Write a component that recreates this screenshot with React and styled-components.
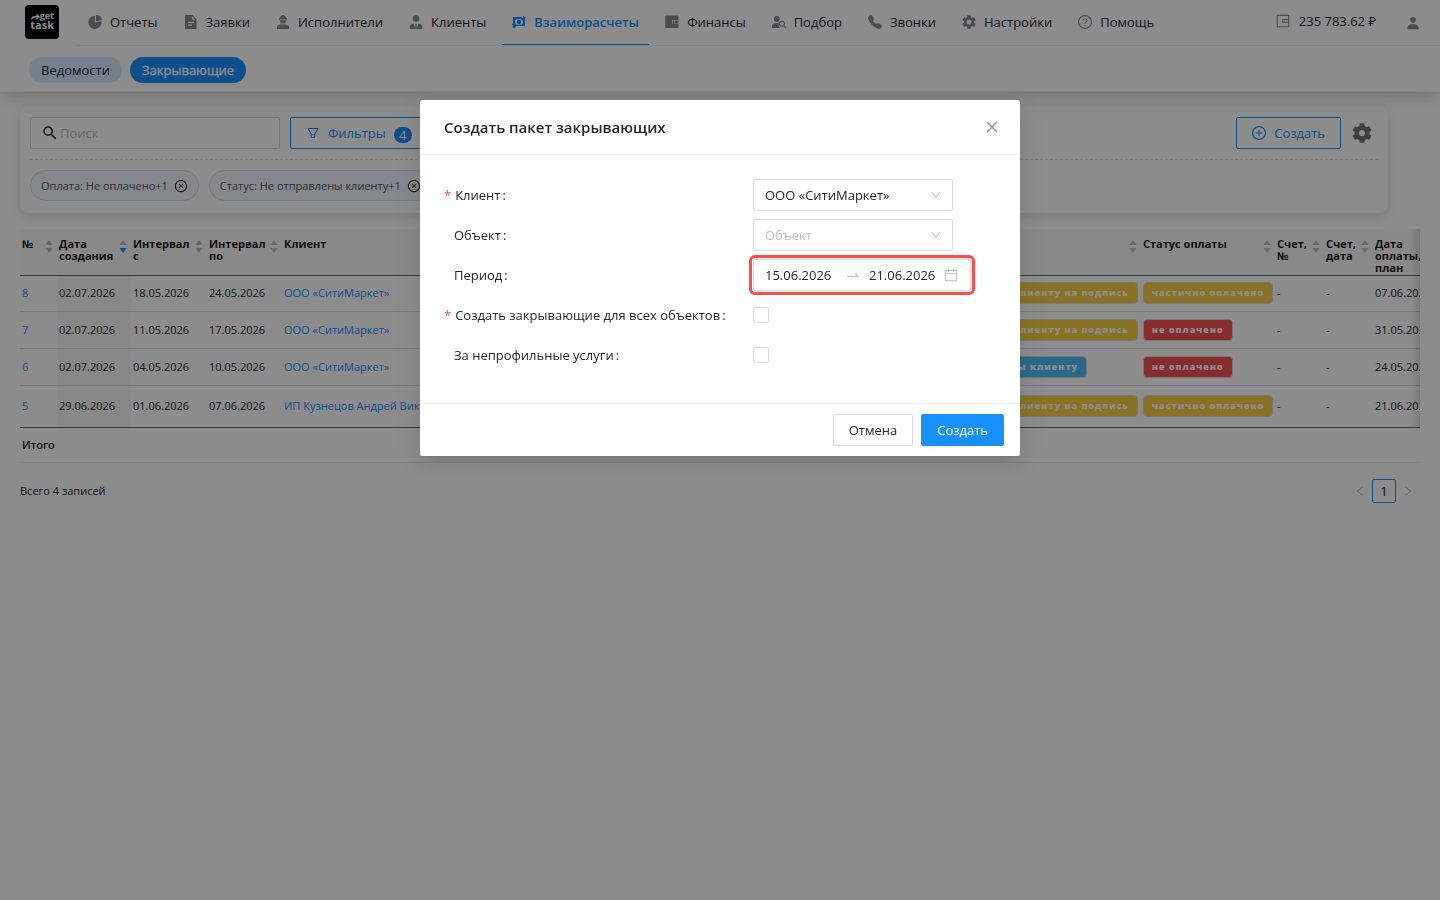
import styled, { createGlobalStyle } from "styled-components";
import {
  AiOutlineCalendar,
  AiOutlineClose,
  AiOutlineCloseCircle,
  AiOutlineDown,
  AiOutlineFilter,
  AiOutlineLeft,
  AiOutlinePlusCircle,
  AiOutlineQuestionCircle,
  AiOutlineRight,
  AiOutlineSwapRight,
  AiOutlineWallet,
} from "react-icons/ai";
import { BsTelephoneFill } from "react-icons/bs";
import { FaCog } from "react-icons/fa";
import { IoPerson } from "react-icons/io5";
import { MdSearch, MdSettings } from "react-icons/md";

const GlobalStyle = createGlobalStyle`
  * {
    box-sizing: border-box;
  }

  body {
    margin: 0;
    background: #fff;
    color: #262626;
    font-family: "Open Sans", "Noto Sans", sans-serif;
    font-size: 13px;
    line-height: 22px;
  }

  button,
  input,
  select {
    font: inherit;
    color: inherit;
  }

  button {
    cursor: pointer;
  }

  a {
    color: #1890ff;
    text-decoration: none;
  }
`;

const Header = styled.header`
  position: relative;
  background: #fff;
  box-shadow: 0 4px 16px rgba(0, 0, 0, 0.18);
`;

const TopBar = styled.div`
  display: flex;
  height: 46px;
  padding-left: 25px;
`;

const Logo = styled.a`
  display: flex;
  flex-direction: column;
  justify-content: center;
  align-items: flex-end;
  width: 34px;
  height: 34px;
  margin: 5px 16px 0 0;
  padding: 0 5px 4px 0;
  border-radius: 4px;
  background: #000;
  color: #fff;
  font-weight: 700;
`;

const LogoTop = styled.span`
  display: flex;
  align-items: center;
  font-size: 9px;
  line-height: 8px;

  svg {
    margin-top: 2px;
  }
`;

const LogoBottom = styled.span`
  font-size: 11px;
  line-height: 9px;
`;

const TopLine = styled.div`
  flex: 1;
  display: flex;
  justify-content: space-between;
  border-bottom: 1px solid #f0f0f0;
`;

const Nav = styled.nav`
  display: flex;
  gap: 6px;
  padding-left: 3px;
`;

const NavLink = styled.a`
  display: flex;
  align-items: center;
  gap: 8px;
  height: 45px;
  padding: 0 10px;
  color: ${({ $active }) => ($active ? "#1890ff" : "#1f2937")};
  font-weight: ${({ $active }) => ($active ? 600 : 400)};
  border-bottom: 1px solid ${({ $active }) => ($active ? "#1890ff" : "transparent")};
  white-space: nowrap;

  svg {
    width: 14px;
    height: 14px;
    color: ${({ $active }) => ($active ? "#1890ff" : "#868d96")};
  }
`;

const Account = styled.div`
  display: flex;
  align-items: center;
  gap: 30px;
  padding-right: 20px;
  color: #1f2937;

  svg {
    color: #868d96;
  }
`;

const Balance = styled.span`
  display: flex;
  align-items: center;
  gap: 8px;
  padding-bottom: 4px;
`;

const IconButton = styled.button`
  display: flex;
  align-items: center;
  justify-content: center;
  padding: 0;
  border: 0;
  background: none;
  color: ${({ $color }) => $color || "#868d96"};
`;

const SubNav = styled.nav`
  display: flex;
  gap: 8px;
  height: 46px;
  margin: 0 25px;
  padding: 11px 4px 0;
  border-bottom: 1px solid #f0f0f0;
`;

const Pill = styled.a`
  height: 26px;
  padding: 0 12px;
  border-radius: 13px;
  line-height: 26px;
  background: ${({ $active }) => ($active ? "#1890ff" : "#d6eaff")};
  color: ${({ $active }) => ($active ? "#fff" : "#1f2937")};
  -webkit-text-stroke: ${({ $active }) => ($active ? "0.3px" : "0")};
`;

const Content = styled.main`
  padding: 15px 20px 0;
`;

const Panel = styled.section`
  height: 106px;
  margin-right: 32px;
  padding: 10px;
  border-radius: 8px;
  background: #fff;
  box-shadow: 0 4px 12px rgba(0, 0, 0, 0.12);
`;

const Toolbar = styled.div`
  display: flex;
  align-items: center;
  gap: 10px;
  padding-bottom: 10px;
  border-bottom: 1px dashed #d9d9d9;
`;

const SearchBox = styled.label`
  display: flex;
  align-items: center;
  gap: 1px;
  width: 250px;
  height: 32px;
  padding: 0 10px;
  border: 1px solid #d9d9d9;
  border-radius: 2px;

  input {
    flex: 1;
    min-width: 0;
    padding: 0;
    border: 0;
    outline: none;
    background: none;
  }

  input::placeholder {
    color: #bfbfbf;
  }
`;

const OutlineButton = styled.button`
  display: flex;
  align-items: center;
  gap: 8px;
  height: 32px;
  margin-left: ${({ $right }) => ($right ? "auto" : "0")};
  padding: 0 15px;
  border: 1px solid #1890ff;
  border-radius: 2px;
  background: #fff;
  color: #1890ff;
`;

const Count = styled.span`
  width: 18px;
  height: 16px;
  margin-top: 4px;
  border-radius: 8px;
  background: #1890ff;
  color: #fff;
  line-height: 16px;
`;

const ToolbarCog = styled(IconButton)`
  width: 22px;
  margin-right: 5px;
`;

const Chips = styled.div`
  display: flex;
  gap: 10px;
  padding-top: 10px;
`;

const Chip = styled.span`
  display: flex;
  align-items: center;
  gap: 6px;
  height: 31px;
  padding: 0 10px;
  border: 1px solid #d3dbee;
  border-radius: 16px;
  background: #f0f8ff;
  color: #555;
  font-size: 11px;
  white-space: nowrap;
`;

const TableScroll = styled.div`
  position: relative;
  margin-top: 16px;
  overflow: hidden;

  &::after {
    content: "";
    position: absolute;
    top: 0;
    right: 0;
    width: 10px;
    height: 198px;
    background: linear-gradient(to left, rgba(0, 0, 0, 0.12), transparent);
  }
`;

const Table = styled.table`
  width: 100%;
  min-width: 1430px;
  table-layout: fixed;
  border-collapse: collapse;
  font-size: 11px;
  line-height: 12px;

  th,
  td {
    padding: 0 2px;
    text-align: left;
    white-space: nowrap;
  }

  tbody tr:last-child td {
    border-bottom: 1px solid #5f6673;
  }
`;

const HeadRow = styled.tr`
  height: 46px;
  background: #fafafa;

  th {
    padding-top: 9px;
    vertical-align: top;
    border-bottom: 1px solid #5f6673;
  }
`;

const HeadCell = styled.div`
  display: flex;
  justify-content: space-between;
  height: 36px;
  padding-right: 2px;
  color: #1a1a1a;
  font-weight: 700;
  white-space: pre-line;

  svg {
    flex: none;
    margin-top: 2px;
  }
`;

const Row = styled.tr`
  height: ${({ $height }) => $height}px;

  td {
    border-bottom: 1px solid #dadada;
  }

  td:nth-child(2) {
    background: #f7f7f7;
  }
`;

const TotalRow = styled.tr`
  height: 35px;

  td {
    border-bottom: 1px solid #f0f0f0;
    font-weight: 600;
  }
`;

const tagColors = {
  yellow: "#f9d044",
  red: "#f55053",
  blue: "#4cc0fb",
};

const Tag = styled.span`
  display: inline-block;
  height: 22px;
  padding: 0 8px;
  border: 1px solid #d9d9d9;
  border-radius: 4px;
  background: ${({ $color }) => tagColors[$color]};
  color: #fff;
  font-size: 9px;
  font-weight: 800;
  letter-spacing: 1px;
  line-height: 20px;
`;

const Pager = styled.div`
  display: flex;
  align-items: center;
  gap: 4px;
  margin-top: 16px;
  padding-right: 4px;
  font-size: 11px;
`;

const PagerTotal = styled.span`
  margin-right: auto;
`;

const PageButton = styled.button`
  width: 24px;
  height: 24px;
  padding: 0;
  border: 1px solid #1890ff;
  border-radius: 2px;
  background: #fff;
  font-size: 13px;
`;

const PageArrow = styled(IconButton)`
  width: 16px;
  height: 24px;
`;

const Mask = styled.div`
  position: fixed;
  inset: 0;
  padding-top: 100px;
  background: rgba(0, 0, 0, 0.45);
`;

const Modal = styled.section`
  width: 600px;
  max-width: 100%;
  margin: 0 auto;
  border-radius: 2px;
  background: #fff;
  box-shadow:
    0 3px 6px -4px rgba(0, 0, 0, 0.12),
    0 6px 16px rgba(0, 0, 0, 0.08),
    0 9px 28px 8px rgba(0, 0, 0, 0.05);
`;

const ModalHeader = styled.div`
  display: flex;
  align-items: center;
  justify-content: space-between;
  height: 55px;
  padding: 0 20px 0 24px;
  border-bottom: 1px solid #f0f0f0;
`;

const ModalTitle = styled.h2`
  margin: 0;
  font-size: 15px;
  font-weight: 600;
  line-height: 22px;
`;

const Form = styled.form`
  display: flex;
  flex-direction: column;
  gap: 8px;
  padding: 24px 24px 32px;
`;

const FormRow = styled.div`
  display: grid;
  grid-template-columns: 309px 1fr;
  align-items: center;
  height: 32px;
`;

const Label = styled.label`
  padding-left: ${({ $required }) => ($required ? 0 : 10)}px;

  &::before {
    content: ${({ $required }) => ($required ? '"*"' : "none")};
    margin-right: 4px;
    color: #ff4d4f;
  }

  &::after {
    content: ":";
    margin-left: 2px;
  }
`;

const SelectBox = styled.div`
  display: flex;
  align-items: center;
  width: 200px;
  height: 32px;
  border: 1px solid #d9d9d9;
  border-radius: 2px;

  select {
    flex: 1;
    height: 30px;
    margin-right: -23px;
    padding: 0 23px 0 11px;
    border: 0;
    outline: none;
    appearance: none;
    background: none;
    color: ${({ $empty }) => ($empty ? "#bfbfbf" : "inherit")};
  }

  svg {
    flex: none;
    margin-right: 10px;
    color: #bfbfbf;
    pointer-events: none;
  }
`;

const RangePicker = styled.div`
  display: flex;
  align-items: center;
  width: 218px;
  height: 32px;
  padding: 0 11px;
  border: 1px solid #d9d9d9;
  border-radius: 2px;
  outline: 3px solid #ff4d4f;
  outline-offset: 1px;
  color: #bfbfbf;

  input {
    width: 72px;
    padding: 0;
    border: 0;
    outline: none;
    background: none;
    color: #262626;
  }

  svg {
    flex: none;
  }
`;

const RangeArrow = styled(AiOutlineSwapRight)`
  margin: 0 8px;
`;

const CalendarIcon = styled(AiOutlineCalendar)`
  margin-left: auto;
`;

const CheckBox = styled.input`
  width: 16px;
  height: 16px;
  margin: 0;
  appearance: none;
  border: 1px solid #d9d9d9;
  border-radius: 2px;
  background: #fff;

  &:checked {
    background: #1890ff;
    border-color: #1890ff;
  }
`;

const ModalFooter = styled.div`
  display: flex;
  justify-content: flex-end;
  gap: 8px;
  padding: 10px 16px;
  border-top: 1px solid #f0f0f0;
`;

const Button = styled.button`
  height: 32px;
  padding: 0 15px;
  border: 1px solid ${({ $primary }) => ($primary ? "#1890ff" : "#d9d9d9")};
  border-radius: 2px;
  background: ${({ $primary }) => ($primary ? "#1890ff" : "#fff")};
  color: ${({ $primary }) => ($primary ? "#fff" : "#262626")};
`;

const PieIcon = () => (
  <svg viewBox="0 0 14 14" fill="currentColor">
    <path d="M8 0a6 6 0 0 1 6 5L8 6.400z" />
    <path d="M7 0.800V7.500L13.400 6.200A6.600 6.600 0 1 1 7 0.800z" />
  </svg>
);

const FileIcon = () => (
  <svg viewBox="0 0 14 14" fill="currentColor">
    <path
      fillRule="evenodd"
      d="M1 0H8.500L12.500 4V14H1zM8 1.200V4.600H11.400zM4 6.800V8H10V6.800zM4 9.600V10.800H8V9.600z"
    />
  </svg>
);

const WorkerIcon = () => (
  <svg viewBox="0 0 14 14" fill="currentColor">
    <path d="M6 0h2v.6a3.400 3.400 0 0 1 2.300 2.600h.7v1.300H3V3.200h.7A3.400 3.400 0 0 1 6 .6z" />
    <path d="M4 5.200h6a3 3.400 0 0 1-6 0z" />
    <path d="M1 14v-2.200C1 10 4.500 9.400 7 9.400s6 .6 6 2.400V14z" />
  </svg>
);

const ManagerIcon = () => (
  <svg viewBox="0 0 14 14" fill="currentColor">
    <circle cx="7" cy="3.500" r="3.300" />
    <path d="M1 14v-2.500C1 9.600 2.800 8.800 4.600 8.400L6 13l.5-2.600L6 9h2l-.5 1.400L8 13l1.400-4.600c1.800.4 3.600 1.200 3.600 3.100V14z" />
  </svg>
);

const MoneyIcon = () => (
  <svg viewBox="0 0 14 14" fill="currentColor">
    <path
      fillRule="evenodd"
      d="M1 2h9v1h3v8H4v1.200H1V10H0V8.600h1zM3 5.200v3.600c.8 0 1.400.4 1.500 1h5c.1-.6.700-1 1.500-1V5.200c-.8 0-1.400-.4-1.500-1h-5c-.1.600-.7 1-1.500 1z"
    />
    <circle cx="7" cy="7" r="2.200" />
    <path d="M11 0.800l3 1.600-3 1.200zM3 10.400L0 11.800l3 1.600z" />
  </svg>
);

const PurseIcon = () => (
  <svg viewBox="0 0 14 14" fill="currentColor">
    <path
      fillRule="evenodd"
      d="M1 .5h12.500V5H7v3.800h6.500V13H1a.8.8 0 0 1-.8-.8V1.300A.8.8 0 0 1 1 .5zM7.600 5.500h5.900v2.800H7.600zM9 6.300v1h1.200v-1z"
    />
  </svg>
);

const SelectionIcon = () => (
  <svg viewBox="0 0 14 14" fill="currentColor">
    <circle cx="4.800" cy="4" r="2.900" />
    <path d="M0 13v-2.200C0 9 2.500 8 4.800 8c.8 0 1.600.1 2.300.3A4 4 0 0 0 8.200 13z" />
    <circle cx="10" cy="8.800" r="2.500" fill="none" stroke="currentColor" strokeWidth="1.100" />
    <path d="M11.800 10.600L13.700 12.700" stroke="currentColor" strokeWidth="1.200" />
  </svg>
);

const SettingsIcon = () => <MdSettings viewBox="2 2 20 20" />;

const HelpIcon = () => <AiOutlineQuestionCircle viewBox="64 64 896 896" />;

const SortIcon = ({ desc }) => (
  <svg width="8" height="14" viewBox="0 0 8 14">
    <path d="M4 0L7.600 5H0.400z" fill="#bfbfbf" />
    <path d="M4 13L0.400 8H7.600z" fill={desc ? "#1890ff" : "#bfbfbf"} />
  </svg>
);

const navItems = [
  { label: "Отчеты", Icon: PieIcon },
  { label: "Заявки", Icon: FileIcon },
  { label: "Исполнители", Icon: WorkerIcon },
  { label: "Клиенты", Icon: ManagerIcon },
  { label: "Взаиморасчеты", Icon: MoneyIcon, active: true },
  { label: "Финансы", Icon: PurseIcon },
  { label: "Подбор", Icon: SelectionIcon },
  { label: "Звонки", Icon: BsTelephoneFill },
  { label: "Настройки", Icon: SettingsIcon },
  { label: "Помощь", Icon: HelpIcon },
];

const columns = [
  { title: "№", width: 37, sort: true },
  { title: "Дата\nсоздания", width: 74, sort: true, desc: true },
  { title: "Интервал\nс", width: 76, sort: true },
  { title: "Интервал\nпо", width: 75, sort: true },
  { title: "Клиент", sort: true },
  { title: "Статус", width: 212, sort: true },
  { title: "Статус оплаты", width: 134, sort: true },
  { title: "Счет,\n№", width: 49, sort: true },
  { title: "Счет,\nдата", width: 49, sort: true },
  { title: "Дата\nоплаты,\nплан", width: 77 },
];

const sign = { text: "отправлены клиенту на подпись", color: "yellow" };
const notSent = { text: "не отправлены клиенту", color: "blue" };
const partial = { text: "частично оплачено", color: "yellow" };
const unpaid = { text: "не оплачено", color: "red" };

const rows = [
  { id: 8, created: "02.07.2026", from: "18.05.2026", to: "24.05.2026", client: "ООО «СитиМаркет»", status: sign, payment: partial, due: "07.06.2026", height: 36 },
  { id: 7, created: "02.07.2026", from: "11.05.2026", to: "17.05.2026", client: "ООО «СитиМаркет»", status: sign, payment: unpaid, due: "31.05.2026", height: 37 },
  { id: 6, created: "02.07.2026", from: "04.05.2026", to: "10.05.2026", client: "ООО «СитиМаркет»", status: notSent, payment: unpaid, due: "24.05.2026", height: 37 },
  { id: 5, created: "29.06.2026", from: "01.06.2026", to: "07.06.2026", client: "ИП Кузнецов Андрей Викторович", status: sign, payment: partial, due: "21.06.2026", height: 42 },
];

const chips = ["Оплата: Не оплачено+1", "Статус: Не отправлены клиенту+1"];

const PageHeader = () => (
  <Header>
    <TopBar>
      <Logo href="#">
        <LogoTop>
          <svg width="9" height="6" viewBox="0 0 9 6" fill="none" stroke="#fff" strokeWidth="1.400">
            <path d="M0.700 5.500C1 3.500 2 2.800 4 2.800H7" />
            <path d="M5.500 0.500L8 2.800L5.500 5" />
          </svg>
          get
        </LogoTop>
        <LogoBottom>task</LogoBottom>
      </Logo>
      <TopLine>
        <Nav>
          {navItems.map(({ label, Icon, active }) => (
            <NavLink href="#" key={label} $active={active}>
              <Icon />
              {label}
            </NavLink>
          ))}
        </Nav>
        <Account>
          <Balance>
            <AiOutlineWallet size={16} />
            235 783.62 ₽
          </Balance>
          <IconButton aria-label="Профиль">
            <IoPerson size={14} />
          </IconButton>
        </Account>
      </TopLine>
    </TopBar>
    <SubNav>
      <Pill href="#">Ведомости</Pill>
      <Pill href="#" $active>
        Закрывающие
      </Pill>
    </SubNav>
  </Header>
);

const FilterPanel = () => (
  <Panel>
    <Toolbar>
      <SearchBox>
        <MdSearch size={18} />
        <input type="text" placeholder="Поиск" aria-label="Поиск" />
      </SearchBox>
      <OutlineButton>
        <AiOutlineFilter size={14} />
        Фильтры
        <Count>4</Count>
      </OutlineButton>
      <OutlineButton $right>
        <AiOutlinePlusCircle size={14} viewBox="64 64 896 896" />
        Создать
      </OutlineButton>
      <ToolbarCog aria-label="Настройки таблицы" $color="#737373">
        <FaCog size={20} />
      </ToolbarCog>
    </Toolbar>
    <Chips>
      {chips.map((chip) => (
        <Chip key={chip}>
          {chip}
          <IconButton aria-label="Убрать" $color="#262626">
            <AiOutlineCloseCircle size={14} />
          </IconButton>
        </Chip>
      ))}
    </Chips>
  </Panel>
);

const DocsTable = () => (
  <TableScroll>
    <Table>
      <colgroup>
        {columns.map(({ title, width }) => (
          <col key={title} width={width} />
        ))}
      </colgroup>
      <thead>
        <HeadRow>
          {columns.map(({ title, sort, desc }) => (
            <th key={title}>
              <HeadCell>
                {title}
                {sort && <SortIcon desc={desc} />}
              </HeadCell>
            </th>
          ))}
        </HeadRow>
      </thead>
      <tbody>
        {rows.map((row) => (
          <Row key={row.id} $height={row.height}>
            <td>
              <a href="#">{row.id}</a>
            </td>
            <td>{row.created}</td>
            <td>{row.from}</td>
            <td>{row.to}</td>
            <td>
              <a href="#">{row.client}</a>
            </td>
            <td>
              <Tag $color={row.status.color}>{row.status.text}</Tag>
            </td>
            <td>
              <Tag $color={row.payment.color}>{row.payment.text}</Tag>
            </td>
            <td>-</td>
            <td>-</td>
            <td>{row.due}</td>
          </Row>
        ))}
      </tbody>
      <tfoot>
        <TotalRow>
          <td colSpan={columns.length}>Итого</td>
        </TotalRow>
      </tfoot>
    </Table>
  </TableScroll>
);

const CreateModal = () => (
  <Mask>
    <Modal role="dialog" aria-labelledby="modal-title">
      <ModalHeader>
        <ModalTitle id="modal-title">Создать пакет закрывающих</ModalTitle>
        <IconButton aria-label="Закрыть">
          <AiOutlineClose size={16} />
        </IconButton>
      </ModalHeader>
      <Form id="create-form">
        <FormRow>
          <Label htmlFor="client" $required>
            Клиент
          </Label>
          <SelectBox>
            <select id="client">
              <option>ООО «СитиМаркет»</option>
            </select>
            <AiOutlineDown size={12} />
          </SelectBox>
        </FormRow>
        <FormRow>
          <Label htmlFor="object">Объект</Label>
          <SelectBox $empty>
            <select id="object">
              <option>Объект</option>
            </select>
            <AiOutlineDown size={12} />
          </SelectBox>
        </FormRow>
        <FormRow>
          <Label htmlFor="period">Период</Label>
          <RangePicker>
            <input id="period" type="text" defaultValue="15.06.2026" />
            <RangeArrow size={16} />
            <input type="text" defaultValue="21.06.2026" aria-label="Конец периода" />
            <CalendarIcon size={16} />
          </RangePicker>
        </FormRow>
        <FormRow>
          <Label htmlFor="all-objects" $required>
            Создать закрывающие для всех объектов
          </Label>
          <CheckBox id="all-objects" type="checkbox" />
        </FormRow>
        <FormRow>
          <Label htmlFor="non-core">За непрофильные услуги</Label>
          <CheckBox id="non-core" type="checkbox" />
        </FormRow>
      </Form>
      <ModalFooter>
        <Button type="button">Отмена</Button>
        <Button type="submit" form="create-form" $primary>
          Создать
        </Button>
      </ModalFooter>
    </Modal>
  </Mask>
);

export default function App() {
  return (
    <>
      <GlobalStyle />
      <PageHeader />
      <Content>
        <FilterPanel />
        <DocsTable />
        <Pager>
          <PagerTotal>Всего 4 записей</PagerTotal>
          <PageArrow aria-label="Назад" $color="#bfbfbf">
            <AiOutlineLeft size={12} />
          </PageArrow>
          <PageButton>1</PageButton>
          <PageArrow aria-label="Вперед" $color="#bfbfbf">
            <AiOutlineRight size={12} />
          </PageArrow>
        </Pager>
      </Content>
      <CreateModal />
    </>
  );
}
